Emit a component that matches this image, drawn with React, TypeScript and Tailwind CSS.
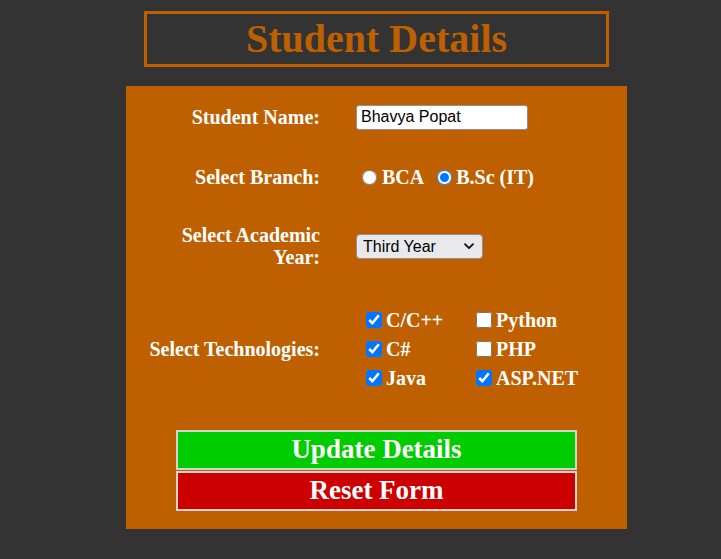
import React from "react";

const serif = { fontFamily: '"Liberation Serif", "Times New Roman", serif' };
const sans = { fontFamily: '"Liberation Sans", Arial, sans-serif' };

function Label({ children }: { children: React.ReactNode }) {
  return (
    <div className="w-[194px] shrink-0 pl-[20px] text-right text-[20px] font-bold leading-[22px] text-white">
      {children}
    </div>
  );
}

function Check({ label, checked }: { label: string; checked?: boolean }) {
  return (
    <label className="flex h-[29px] items-center gap-[4px] text-[20px] font-bold text-white">
      <input type="checkbox" defaultChecked={checked} className="m-0 h-[16px] w-[16px]" />
      {label}
    </label>
  );
}

export default function App() {
  return (
    <div className="min-h-[559px] w-full bg-[#333333] pt-[11px]" style={serif}>
      <div className="ml-[144px] flex h-[56px] w-[465px] items-center justify-center border-[3px] border-[#bf6000]">
        <h1 className="text-[40px] font-bold leading-none text-[#bf6000]">Student Details</h1>
      </div>

      <div className="ml-[126px] mt-[19px] w-[501px] bg-[#bf6000] pt-[12px] pb-[18px]">
        <form className="flex flex-col">
          {/* Name */}
          <div className="flex h-[38px] items-center gap-[36px]">
            <Label>Student Name:</Label>
            <input
              defaultValue="Bhavya Popat"
              className="h-[25px] w-[172px] rounded-[3px] border border-[#8f8f9d] bg-white px-[4px] text-[16px] text-black"
              style={sans}
            />
          </div>

          {/* Branch */}
          <div className="mt-[22px] flex h-[38px] items-center gap-[36px]">
            <Label>Select Branch:</Label>
            <div className="flex items-center pl-[6px] text-[20px] font-bold text-white">
              <input type="radio" name="branch" className="m-0 h-[15px] w-[15px]" />
              <span className="ml-[5px]">BCA</span>
              <input type="radio" name="branch" defaultChecked className="m-0 ml-[13px] h-[15px] w-[15px]" />
              <span className="ml-[4px]">B.Sc (IT)</span>
            </div>
          </div>

          {/* Year */}
          <div className="mt-[26px] flex h-[48px] items-center gap-[36px]">
            <Label>
              Select Academic
              <br />
              Year:
            </Label>
            <div className="relative h-[25px] w-[127px]">
              <select
                defaultValue="3"
                className="h-full w-full appearance-none rounded-[4px] border border-[#8f8f9d] bg-[#e9e9ed] pl-[6px] text-[16px] text-black"
                style={sans}
              >
                <option value="1">First Year</option>
                <option value="2">Second Year</option>
                <option value="3">Third Year</option>
              </select>
              <svg
                className="pointer-events-none absolute right-[9px] top-[9px]"
                width="10"
                height="7"
                viewBox="0 0 10 7"
                fill="none"
              >
                <path d="M1 1.2 5 5.2 9 1.2" stroke="#111" strokeWidth="1.8" strokeLinecap="round" strokeLinejoin="round" />
              </svg>
            </div>
          </div>

          {/* Technologies */}
          <div className="mt-[30px] flex h-[98px] items-center gap-[36px]">
            <Label>Select Technologies:</Label>
            <div className="grid grid-cols-[110px_110px] pl-[10px]">
              <Check label="C/C++" checked />
              <Check label="Python" />
              <Check label="C#" checked />
              <Check label="PHP" />
              <Check label="Java" checked />
              <Check label="ASP.NET" checked />
            </div>
          </div>

          {/* Buttons */}
          <div className="mt-[32px] ml-[50px] flex w-[401px] flex-col">
            <button
              type="button"
              className="h-[40px] border-2 border-[#d4d4d4] bg-[#00cc00] pb-[1px] text-[27px] font-bold leading-none text-white"
            >
              Update Details
            </button>
            <button
              type="reset"
              className="mt-px h-[40px] border-2 border-[#d4d4d4] bg-[#cc0000] pb-[1px] text-[27px] font-bold leading-none text-white"
            >
              Reset Form
            </button>
          </div>
        </form>
      </div>
    </div>
  );
}
